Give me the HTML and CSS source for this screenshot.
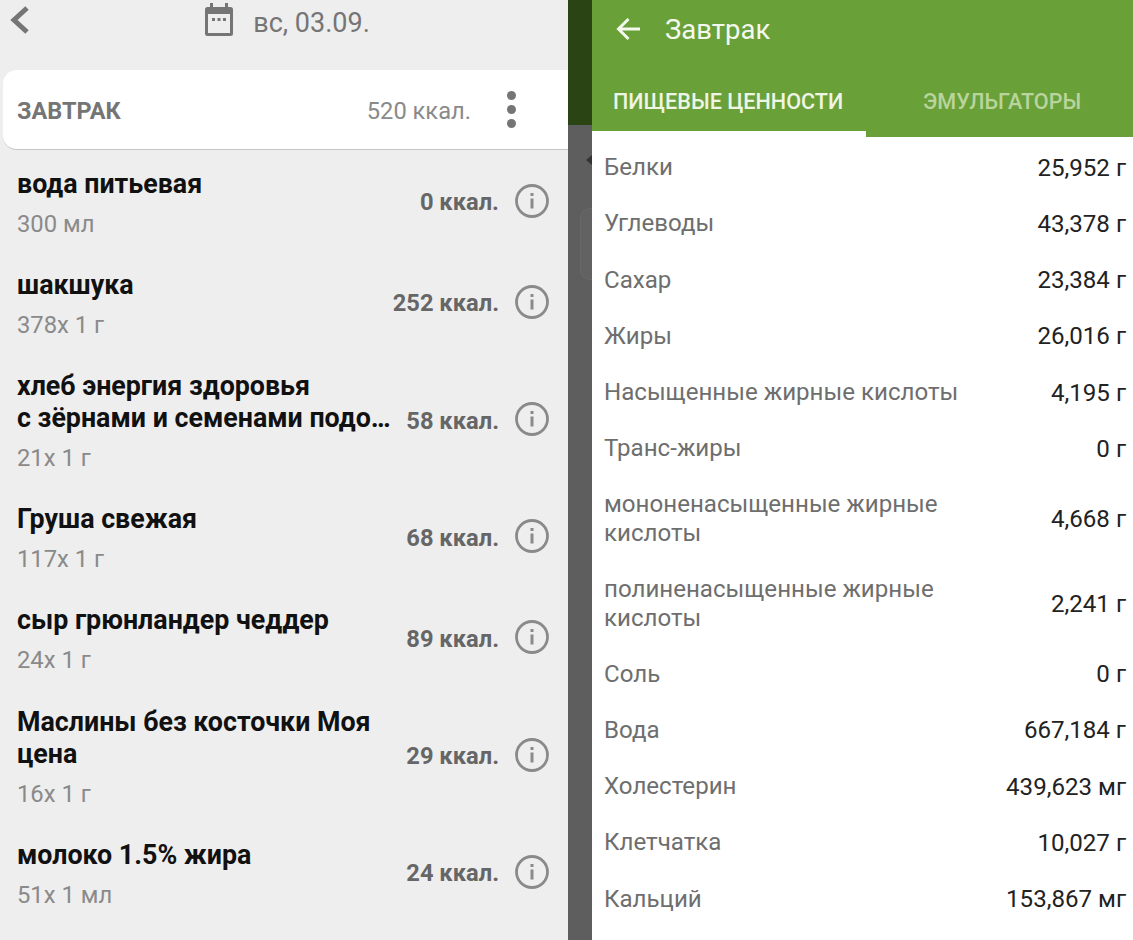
FILE: index.html
```html
<!DOCTYPE html>
<html lang="ru">
<head>
<meta charset="utf-8">
<title>Завтрак</title>
<link rel="stylesheet" href="styles.css">
</head>
<body>
<div class="screen">
  <main class="left">
    <header class="datebar">
      <svg class="back" width="32" height="40" viewBox="0 0 32 40"><path d="M27 8 L14 20 L27 32" fill="none" stroke="#757575" stroke-width="5"/></svg>
      <div class="date">
        <svg width="32" height="36" viewBox="0 0 32 36"><path fill="#757575" d="M7 3h3v4h12V3h3v4h2.500A2.500 2.500 0 0 1 30 9.500v24a2.500 2.500 0 0 1-2.500 2.500h-23A2.500 2.500 0 0 1 2 33.500v-24A2.500 2.500 0 0 1 4.500 7H7z"/><rect x="5" y="14" width="22" height="19" fill="#eeeeee"/><rect x="9" y="18" width="3" height="3" fill="#757575"/><rect x="14.500" y="18" width="3" height="3" fill="#757575"/><rect x="20" y="18" width="3" height="3" fill="#757575"/></svg>
        <span>вс, 03.09.</span>
      </div>
    </header>
    <section class="meal">
      <strong>ЗАВТРАК</strong>
      <span class="meal-kcal">520 ккал.</span>
      <span class="dots"><i></i><i></i><i></i></span>
    </section>
    <ul class="foods">
      <li class="food h101"><div class="info"><b>вода питьевая</b><small>300 мл</small></div><span class="kcal">0 ккал.</span><svg class="i" width="34" height="34" viewBox="0 0 34 34"><circle cx="17" cy="17" r="15.500" fill="none" stroke="#8a8a8a" stroke-width="2.800"/><rect x="15.500" y="14.500" width="3" height="10" fill="#8a8a8a"/><rect x="15.500" y="9" width="3" height="3" fill="#8a8a8a"/></svg></li>
      <li class="food h101"><div class="info"><b>шакшука</b><small>378x 1 г</small></div><span class="kcal">252 ккал.</span><svg class="i" width="34" height="34" viewBox="0 0 34 34"><circle cx="17" cy="17" r="15.500" fill="none" stroke="#8a8a8a" stroke-width="2.800"/><rect x="15.500" y="14.500" width="3" height="10" fill="#8a8a8a"/><rect x="15.500" y="9" width="3" height="3" fill="#8a8a8a"/></svg></li>
      <li class="food h133"><div class="info"><b>хлеб энергия здоровья<br>с зёрнами и семенами подо…</b><small>21x 1 г</small></div><span class="kcal">58 ккал.</span><svg class="i" width="34" height="34" viewBox="0 0 34 34"><circle cx="17" cy="17" r="15.500" fill="none" stroke="#8a8a8a" stroke-width="2.800"/><rect x="15.500" y="14.500" width="3" height="10" fill="#8a8a8a"/><rect x="15.500" y="9" width="3" height="3" fill="#8a8a8a"/></svg></li>
      <li class="food h101"><div class="info"><b>Груша свежая</b><small>117x 1 г</small></div><span class="kcal">68 ккал.</span><svg class="i" width="34" height="34" viewBox="0 0 34 34"><circle cx="17" cy="17" r="15.500" fill="none" stroke="#8a8a8a" stroke-width="2.800"/><rect x="15.500" y="14.500" width="3" height="10" fill="#8a8a8a"/><rect x="15.500" y="9" width="3" height="3" fill="#8a8a8a"/></svg></li>
      <li class="food h101"><div class="info"><b>сыр грюнландер чеддер</b><small>24x 1 г</small></div><span class="kcal">89 ккал.</span><svg class="i" width="34" height="34" viewBox="0 0 34 34"><circle cx="17" cy="17" r="15.500" fill="none" stroke="#8a8a8a" stroke-width="2.800"/><rect x="15.500" y="14.500" width="3" height="10" fill="#8a8a8a"/><rect x="15.500" y="9" width="3" height="3" fill="#8a8a8a"/></svg></li>
      <li class="food h133"><div class="info"><b>Маслины без косточки Моя<br>цена</b><small>16x 1 г</small></div><span class="kcal">29 ккал.</span><svg class="i" width="34" height="34" viewBox="0 0 34 34"><circle cx="17" cy="17" r="15.500" fill="none" stroke="#8a8a8a" stroke-width="2.800"/><rect x="15.500" y="14.500" width="3" height="10" fill="#8a8a8a"/><rect x="15.500" y="9" width="3" height="3" fill="#8a8a8a"/></svg></li>
      <li class="food h101"><div class="info"><b>молоко 1.5% жира</b><small>51x 1 мл</small></div><span class="kcal">24 ккал.</span><svg class="i" width="34" height="34" viewBox="0 0 34 34"><circle cx="17" cy="17" r="15.500" fill="none" stroke="#8a8a8a" stroke-width="2.800"/><rect x="15.500" y="14.500" width="3" height="10" fill="#8a8a8a"/><rect x="15.500" y="9" width="3" height="3" fill="#8a8a8a"/></svg></li>
    </ul>
  </main>
  <div class="scrim">
    <div class="scrim-top"></div>
    <div class="scrim-arrow"></div>
    <div class="scrim-tab"></div>
  </div>
  <aside class="panel">
    <header class="appbar">
      <div class="titlebar">
        <svg width="26" height="24" viewBox="0 0 26 24"><path d="M24 12H3M12.500 2 L2.500 12 L12.500 22" fill="none" stroke="#f4f8ef" stroke-width="3"/></svg>
        <h1>Завтрак</h1>
      </div>
      <nav class="tabs">
        <span class="tab active">ПИЩЕВЫЕ ЦЕННОСТИ</span>
        <span class="tab">ЭМУЛЬГАТОРЫ</span>
      </nav>
    </header>
    <div class="rows">
      <div class="row"><span>Белки</span><b>25,952 г</b></div>
      <div class="row"><span>Углеводы</span><b>43,378 г</b></div>
      <div class="row"><span>Сахар</span><b>23,384 г</b></div>
      <div class="row"><span>Жиры</span><b>26,016 г</b></div>
      <div class="row"><span>Насыщенные жирные кислоты</span><b>4,195 г</b></div>
      <div class="row"><span>Транс-жиры</span><b>0 г</b></div>
      <div class="row tall"><span>мононенасыщенные жирные<br>кислоты</span><b>4,668 г</b></div>
      <div class="row tall"><span>полиненасыщенные жирные<br>кислоты</span><b>2,241 г</b></div>
      <div class="row"><span>Соль</span><b>0 г</b></div>
      <div class="row"><span>Вода</span><b>667,184 г</b></div>
      <div class="row"><span>Холестерин</span><b>439,623 мг</b></div>
      <div class="row"><span>Клетчатка</span><b>10,027 г</b></div>
      <div class="row"><span>Кальций</span><b>153,867 мг</b></div>
    </div>
  </aside>
</div>
</body>
</html>
```
FILE: styles.css
```css
* { box-sizing: border-box; }
html, body { margin: 0; padding: 0; }
body { width: 1133px; height: 940px; overflow: hidden; font-family: Roboto, "Liberation Sans", sans-serif; background: #eeeeee; }
.screen { display: flex; width: 1133px; height: 940px; overflow: hidden; }

.left { width: 568px; flex: none; background: #eeeeee; }
.datebar { position: relative; height: 70px; display: flex; justify-content: center; }
.back { position: absolute; left: 0; top: 0; }
.date { display: flex; align-items: flex-start; gap: 18px; margin-left: 5px; color: #757575; font-size: 27px; line-height: 46px; }
.meal { height: 80px; margin-left: 3px; background: #fff; border-radius: 14px 0 0 14px; border-bottom: 1px solid #c4c4c4; display: flex; align-items: center; padding-left: 14px; }
.meal strong { color: #757575; font-size: 23.500px; font-weight: 700; flex: 1; padding-top: 2px; }
.meal-kcal { color: #8a8a8a; font-size: 23.700px; margin-right: 36px; padding-top: 2px; }
.dots { display: flex; flex-direction: column; gap: 5px; margin-right: 52px; }
.dots i { display: block; width: 9px; height: 9px; border-radius: 50%; background: #757575; }

.foods { list-style: none; margin: 0; padding: 0; }
.food { display: flex; align-items: center; padding: 0 19px 0 17px; }
.h101 { height: 101.200px; }
.h133 { height: 133.300px; }
.info { flex: 1; min-width: 0; padding-top: 4px; }
.info b { display: block; color: #111; font-size: 26.800px; font-weight: 700; line-height: 32px; white-space: nowrap; }
.info small { display: block; color: #8a8a8a; font-size: 23.800px; line-height: 27px; margin-top: 11px; }
.kcal { color: #666; font-size: 23.700px; font-weight: 700; margin-right: 16px; margin-top: 3px; white-space: nowrap; }
.i { flex: none; }

.scrim { position: relative; width: 24px; flex: none; background: #5e5e5e; }
.scrim-top { height: 125px; background: #2b4413; }
.scrim-arrow { position: absolute; right: 0; top: 155px; border: 5px solid transparent; border-left: 0; border-right: 6px solid #333; }
.scrim-tab { position: absolute; right: 0; top: 208px; width: 12px; height: 72px; border: 1px solid #686868; border-right: 0; border-radius: 10px 0 0 10px; background: #626262; }

.panel { flex: 1; background: #fff; }
.appbar { height: 137px; background: #6aa038; display: flex; flex-direction: column; }
.titlebar { height: 58px; display: flex; align-items: center; gap: 23px; padding-left: 24px; color: #f4f8ef; }
.titlebar h1 { margin: 0; font-size: 27.500px; font-weight: 400; }
.tabs { flex: 1; display: flex; }
.tab { color: #b9d49c; font-size: 21.600px; font-weight: 500; line-height: 88px; height: 79px; width: 267px; padding-left: 57px; white-space: nowrap; }
.tab.active { color: #eef5e4; width: 274px; padding-left: 21px; border-bottom: 6px solid #fff; }
.rows { padding: 2.500px 7px 0 12px; }
.row { height: 56.250px; display: flex; align-items: center; justify-content: space-between; font-size: 24.100px; }
.row.tall { height: 84.500px; }
.row span { color: #6e6e6e; line-height: 29px; }
.row b { color: #222; font-weight: 400; white-space: nowrap; }
```
